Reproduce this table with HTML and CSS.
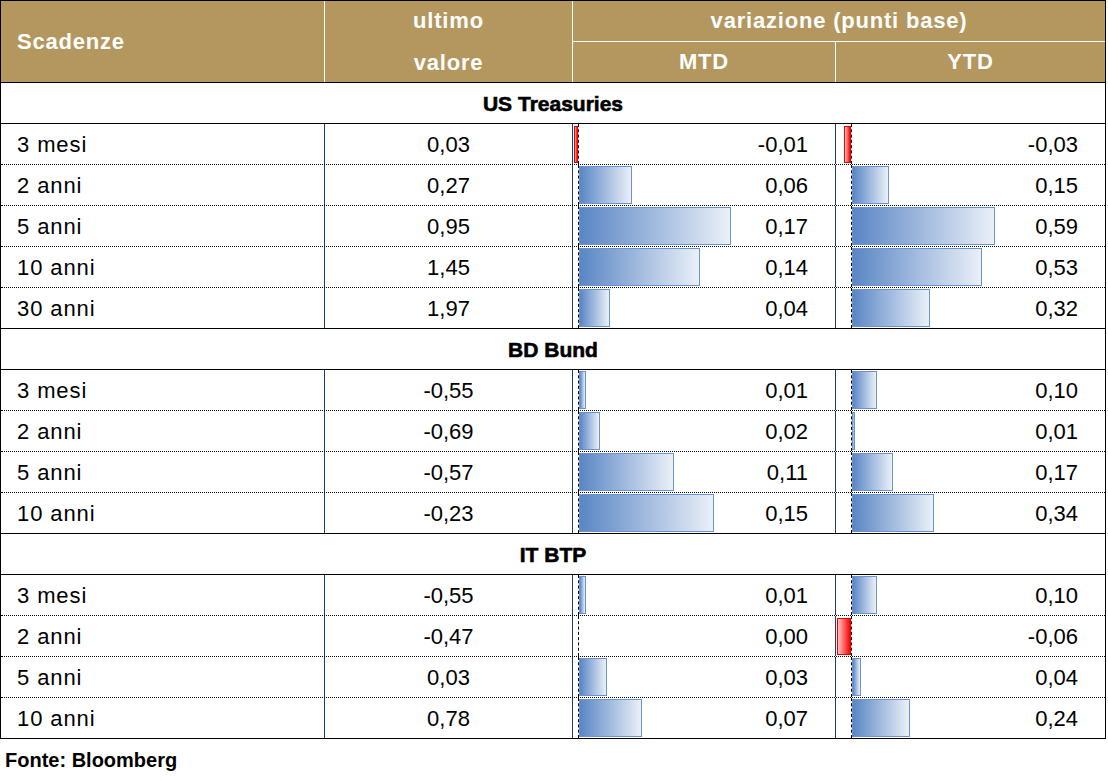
FILE: index.html
```html
<!DOCTYPE html>
<html lang="it">
<head>
<meta charset="utf-8">
<title>Rendimenti titoli di stato</title>
<link rel="stylesheet" href="styles.css">
</head>
<body>
<div class="tbl">
  <div class="head">
    <div class="h-name">Scadenze</div>
    <div class="h-last"><span>ultimo</span><span>valore</span></div>
    <div class="h-var">variazione (punti base)</div>
    <div class="h-mtd">MTD</div>
    <div class="h-ytd">YTD</div>
  </div>

  <div class="group">US Treasuries</div>
  <div class="row first">
    <div class="c-name">3 mesi</div><div class="c-last">0,03</div>
    <div class="c-bar mtd"><div class="neg"><span class="nbar" style="width:4px"></span></div><div class="pos"><span class="val">-0,01</span></div></div>
    <div class="c-bar ytd"><div class="neg"><span class="nbar" style="width:7px"></span></div><div class="pos"><span class="val">-0,03</span></div></div>
  </div>
  <div class="row">
    <div class="c-name">2 anni</div><div class="c-last">0,27</div>
    <div class="c-bar mtd"><div class="neg"></div><div class="pos"><span class="pbar" style="width:53px"></span><span class="val">0,06</span></div></div>
    <div class="c-bar ytd"><div class="neg"></div><div class="pos"><span class="pbar" style="width:37px"></span><span class="val">0,15</span></div></div>
  </div>
  <div class="row">
    <div class="c-name">5 anni</div><div class="c-last">0,95</div>
    <div class="c-bar mtd"><div class="neg"></div><div class="pos"><span class="pbar" style="width:152px"></span><span class="val">0,17</span></div></div>
    <div class="c-bar ytd"><div class="neg"></div><div class="pos"><span class="pbar" style="width:143px"></span><span class="val">0,59</span></div></div>
  </div>
  <div class="row">
    <div class="c-name">10 anni</div><div class="c-last">1,45</div>
    <div class="c-bar mtd"><div class="neg"></div><div class="pos"><span class="pbar" style="width:121px"></span><span class="val">0,14</span></div></div>
    <div class="c-bar ytd"><div class="neg"></div><div class="pos"><span class="pbar" style="width:130px"></span><span class="val">0,53</span></div></div>
  </div>
  <div class="row">
    <div class="c-name">30 anni</div><div class="c-last">1,97</div>
    <div class="c-bar mtd"><div class="neg"></div><div class="pos"><span class="pbar" style="width:31px"></span><span class="val">0,04</span></div></div>
    <div class="c-bar ytd"><div class="neg"></div><div class="pos"><span class="pbar" style="width:78px"></span><span class="val">0,32</span></div></div>
  </div>

  <div class="group">BD Bund</div>
  <div class="row first">
    <div class="c-name">3 mesi</div><div class="c-last">-0,55</div>
    <div class="c-bar mtd"><div class="neg"></div><div class="pos"><span class="pbar" style="width:7px"></span><span class="val">0,01</span></div></div>
    <div class="c-bar ytd"><div class="neg"></div><div class="pos"><span class="pbar" style="width:25px"></span><span class="val">0,10</span></div></div>
  </div>
  <div class="row">
    <div class="c-name">2 anni</div><div class="c-last">-0,69</div>
    <div class="c-bar mtd"><div class="neg"></div><div class="pos"><span class="pbar" style="width:21px"></span><span class="val">0,02</span></div></div>
    <div class="c-bar ytd"><div class="neg"></div><div class="pos"><span class="pbar" style="width:3px"></span><span class="val">0,01</span></div></div>
  </div>
  <div class="row">
    <div class="c-name">5 anni</div><div class="c-last">-0,57</div>
    <div class="c-bar mtd"><div class="neg"></div><div class="pos"><span class="pbar" style="width:95px"></span><span class="val">0,11</span></div></div>
    <div class="c-bar ytd"><div class="neg"></div><div class="pos"><span class="pbar" style="width:41px"></span><span class="val">0,17</span></div></div>
  </div>
  <div class="row">
    <div class="c-name">10 anni</div><div class="c-last">-0,23</div>
    <div class="c-bar mtd"><div class="neg"></div><div class="pos"><span class="pbar" style="width:135px"></span><span class="val">0,15</span></div></div>
    <div class="c-bar ytd"><div class="neg"></div><div class="pos"><span class="pbar" style="width:82px"></span><span class="val">0,34</span></div></div>
  </div>

  <div class="group">IT BTP</div>
  <div class="row first">
    <div class="c-name">3 mesi</div><div class="c-last">-0,55</div>
    <div class="c-bar mtd"><div class="neg"></div><div class="pos"><span class="pbar" style="width:7px"></span><span class="val">0,01</span></div></div>
    <div class="c-bar ytd"><div class="neg"></div><div class="pos"><span class="pbar" style="width:25px"></span><span class="val">0,10</span></div></div>
  </div>
  <div class="row">
    <div class="c-name">2 anni</div><div class="c-last">-0,47</div>
    <div class="c-bar mtd"><div class="neg"></div><div class="pos"><span class="val">0,00</span></div></div>
    <div class="c-bar ytd"><div class="neg"><span class="nbar" style="width:14px"></span></div><div class="pos"><span class="val">-0,06</span></div></div>
  </div>
  <div class="row">
    <div class="c-name">5 anni</div><div class="c-last">0,03</div>
    <div class="c-bar mtd"><div class="neg"></div><div class="pos"><span class="pbar" style="width:28px"></span><span class="val">0,03</span></div></div>
    <div class="c-bar ytd"><div class="neg"></div><div class="pos"><span class="pbar" style="width:9px"></span><span class="val">0,04</span></div></div>
  </div>
  <div class="row">
    <div class="c-name">10 anni</div><div class="c-last">0,78</div>
    <div class="c-bar mtd"><div class="neg"></div><div class="pos"><span class="pbar" style="width:63px"></span><span class="val">0,07</span></div></div>
    <div class="c-bar ytd"><div class="neg"></div><div class="pos"><span class="pbar" style="width:58px"></span><span class="val">0,24</span></div></div>
  </div>
</div>
<div class="source">Fonte: Bloomberg</div>
</body>
</html>
```
FILE: styles.css
```css
html, body {
  margin: 0;
  padding: 0;
  background: #ffffff;
}
body {
  font-family: "Liberation Sans", Arial, sans-serif;
  color: #000;
}
.tbl {
  width: 1106px;
  box-sizing: border-box;
  border: 1px solid #000;
}
.head {
  display: grid;
  grid-template-columns: 323px 248px 263px 270px;
  grid-template-rows: 40px 41px;
  background: #b4975e;
  color: #fff;
  font-weight: bold;
  font-size: 22px;
  letter-spacing: 0.8px;
}
.head > div {
  display: flex;
  align-items: center;
  justify-content: center;
  box-sizing: border-box;
}
.h-name {
  grid-row: 1 / 3;
  grid-column: 1;
  justify-content: flex-start !important;
  padding-left: 16px;
}
.h-last {
  grid-row: 1 / 3;
  grid-column: 2;
  border-left: 1px solid #fff;
  flex-direction: column;
}
.h-last span {
  height: 40px;
  line-height: 40px;
}
.h-last span + span {
  height: 41px;
  line-height: 43px;
}
.h-var {
  grid-row: 1;
  grid-column: 3 / 5;
  border-left: 1px solid #fff;
}
.h-mtd {
  grid-row: 2;
  grid-column: 3;
  border-left: 1px solid #fff;
  border-top: 1px solid #fff;
}
.h-ytd {
  grid-row: 2;
  grid-column: 4;
  border-left: 1px solid #fff;
  border-top: 1px solid #fff;
}
.group {
  height: 41px;
  box-sizing: border-box;
  border-top: 1px solid #000;
  display: flex;
  align-items: center;
  justify-content: center;
  font-weight: bold;
  font-size: 21px;
  -webkit-text-stroke: 0.6px #000;
  padding-top: 1px;
}
.row {
  display: grid;
  grid-template-columns: 323px 248px 263px 270px;
  height: 41px;
  box-sizing: border-box;
  border-top: 1px dotted #000;
  font-size: 22px;
}
.row.first {
  border-top: 1px solid #000;
}
.c-name {
  display: flex;
  align-items: center;
  padding: 1px 0 0 16px;
  letter-spacing: 0.9px;
}
.c-last {
  display: flex;
  align-items: center;
  justify-content: center;
  padding-top: 1px;
  border-left: 1px solid #1c3f66;
}
.c-bar {
  display: flex;
  border-left: 1px solid #1c3f66;
}
.mtd .neg {
  width: 5px;
}
.ytd .neg {
  width: 15px;
}
.neg {
  flex: none;
  display: flex;
  justify-content: flex-end;
  align-items: center;
}
.pos {
  flex: 1;
  display: flex;
  align-items: center;
  border-left: 1px dashed #000;
  padding-right: 27px;
}
.pbar {
  height: 38px;
  box-sizing: border-box;
  border: 1px solid #6b93cd;
  background: linear-gradient(to right, #5a86c5, #eaf0f8);
}
.nbar {
  height: 37px;
  box-sizing: border-box;
  border: 1px solid #e00000;
  background: linear-gradient(to left, #ff0000, #ffc4c4);
}
.val {
  margin-left: auto;
  padding-top: 2px;
}
.source {
  margin-top: 9px;
  padding-left: 5px;
  font-weight: bold;
  font-size: 20px;
  line-height: 24px;
}
```
